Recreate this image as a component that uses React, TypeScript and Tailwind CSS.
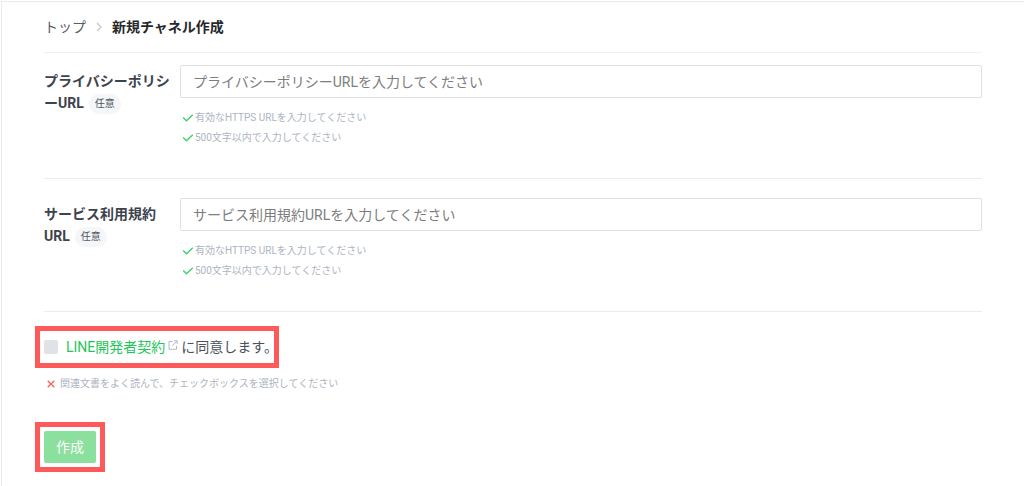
import type { FC } from "react";

interface UrlFieldProps {
  id: string;
  labelLines: [string, string];
  placeholder: string;
  className: string;
}

const HINTS = ["有効なHTTPS URLを入力してください", "500文字以内で入力してください"];

const CheckIcon: FC = () => (
  <svg
    viewBox="0 0 12 10"
    className="w-3 h-[10px] shrink-0"
    fill="none"
    stroke="#3fd070"
    strokeWidth="1.4"
  >
    <path d="M1.2 4.5 4.5 7.8 10.8 1.8" />
  </svg>
);

const CrossIcon: FC = () => (
  <svg
    viewBox="0 0 10 10"
    className="w-[10px] h-[10px] shrink-0"
    fill="none"
    stroke="#f4695c"
    strokeWidth="1.4"
  >
    <path d="M1.7 1.7 8.3 8.3M8.3 1.7 1.7 8.3" />
  </svg>
);

const ExternalIcon: FC = () => (
  <svg
    viewBox="0 0 10 10"
    className="w-[10px] h-[10px] shrink-0 mx-[3px] mb-1"
    fill="none"
    stroke="#b3bac5"
    strokeWidth="1"
  >
    <path d="M4.5 1.5H1V9.3H8.5V5.8M6 .8H9.2V4M9 1 4.3 5.7" />
  </svg>
);

const UrlField: FC<UrlFieldProps> = ({
  id,
  labelLines,
  placeholder,
  className,
}) => {
  return (
    <div className={`flex border-b border-[#ececee] ${className}`}>
      <div className="w-[136px] shrink-0 pt-[5px] text-sm leading-[22px] font-bold text-[#3c434d] whitespace-nowrap">
        <label htmlFor={id}>
          {labelLines[0]}
          <br />
          {labelLines[1]}
        </label>
        <span className="inline-block ml-[5px] px-[6px] rounded-full bg-[#f5f6f8] text-[10px] leading-5 font-normal text-[#4d5562] align-middle">
          任意
        </span>
      </div>
      <div className="flex-1 min-w-0">
        <input
          id={id}
          type="text"
          placeholder={placeholder}
          className="block w-full h-[33px] px-3 border border-[#dfe1e6] rounded-xs text-sm text-[#3c434d] placeholder:text-[#7d7d7d] outline-none"
        />
        <ul className="mt-[10px] ml-[2px] text-[10px] leading-5 text-[#adb4bf]">
          {HINTS.map((hint) => (
            <li key={hint} className="flex items-center gap-px">
              <CheckIcon />
              {hint}
            </li>
          ))}
        </ul>
      </div>
    </div>
  );
};

const App: FC = () => {
  return (
    <div className="min-h-screen bg-white pt-px pl-px font-['Roboto','Noto_Sans_CJK_JP',sans-serif]">
      <main
        lang="ja"
        className="min-h-[calc(100vh-1px)] border-t border-l border-[#e9ebef] px-[42px]"
      >
        <nav className="flex items-center h-[51px] border-b border-[#f0f0f2] text-sm text-[#555b64]">
          <a href="#top">トップ</a>
          <svg
            viewBox="0 0 6 10"
            className="w-[6px] h-[10px] mx-[10px]"
            fill="none"
            stroke="#c3c8d0"
            strokeWidth="1.2"
          >
            <path d="M1 1 5 5 1 9" />
          </svg>
          <span className="font-bold text-[#26282c]">新規チャネル作成</span>
        </nav>

        <form>
          <UrlField
            id="privacy-policy-url"
            labelLines={["プライバシーポリシ", "ーURL"]}
            placeholder="プライバシーポリシーURLを入力してください"
            className="pt-3 h-[126px]"
          />
          <UrlField
            id="terms-of-use-url"
            labelLines={["サービス利用規約", "URL"]}
            placeholder="サービス利用規約URLを入力してください"
            className="pt-[19px] h-[133px]"
          />

          <div className="flex items-center w-fit h-[42px] mt-[14px] -ml-[9px] pl-1 border-[5px] border-[#ff5a5a] text-sm text-[#4a515c]">
            <input
              id="agreement"
              type="checkbox"
              aria-label="LINE開発者契約に同意します。"
              className="appearance-none w-[14px] h-[14px] mr-2 rounded-xs bg-[#dfe2e7]"
            />
            <a href="#agreement-terms" className="flex items-center text-[#1fc65a]">
              LINE開発者契約
              <ExternalIcon />
            </a>
            <label htmlFor="agreement" className="-mr-1">
              に同意します。
            </label>
          </div>
          <p className="flex items-center gap-1 mt-[6px] ml-[2px] text-[10px] leading-5 text-[#adb4bf]">
            <CrossIcon />
            関連文書をよく読んで、チェックボックスを選択してください
          </p>

          <div className="w-fit mt-7 -ml-[9px] p-1 border-[5px] border-[#ff5a5a]">
            <button
              type="button"
              className="block w-[52px] h-8 rounded-xs bg-[#8be09e] text-sm text-white"
            >
              作成
            </button>
          </div>
        </form>
      </main>
    </div>
  );
};

export default App;
